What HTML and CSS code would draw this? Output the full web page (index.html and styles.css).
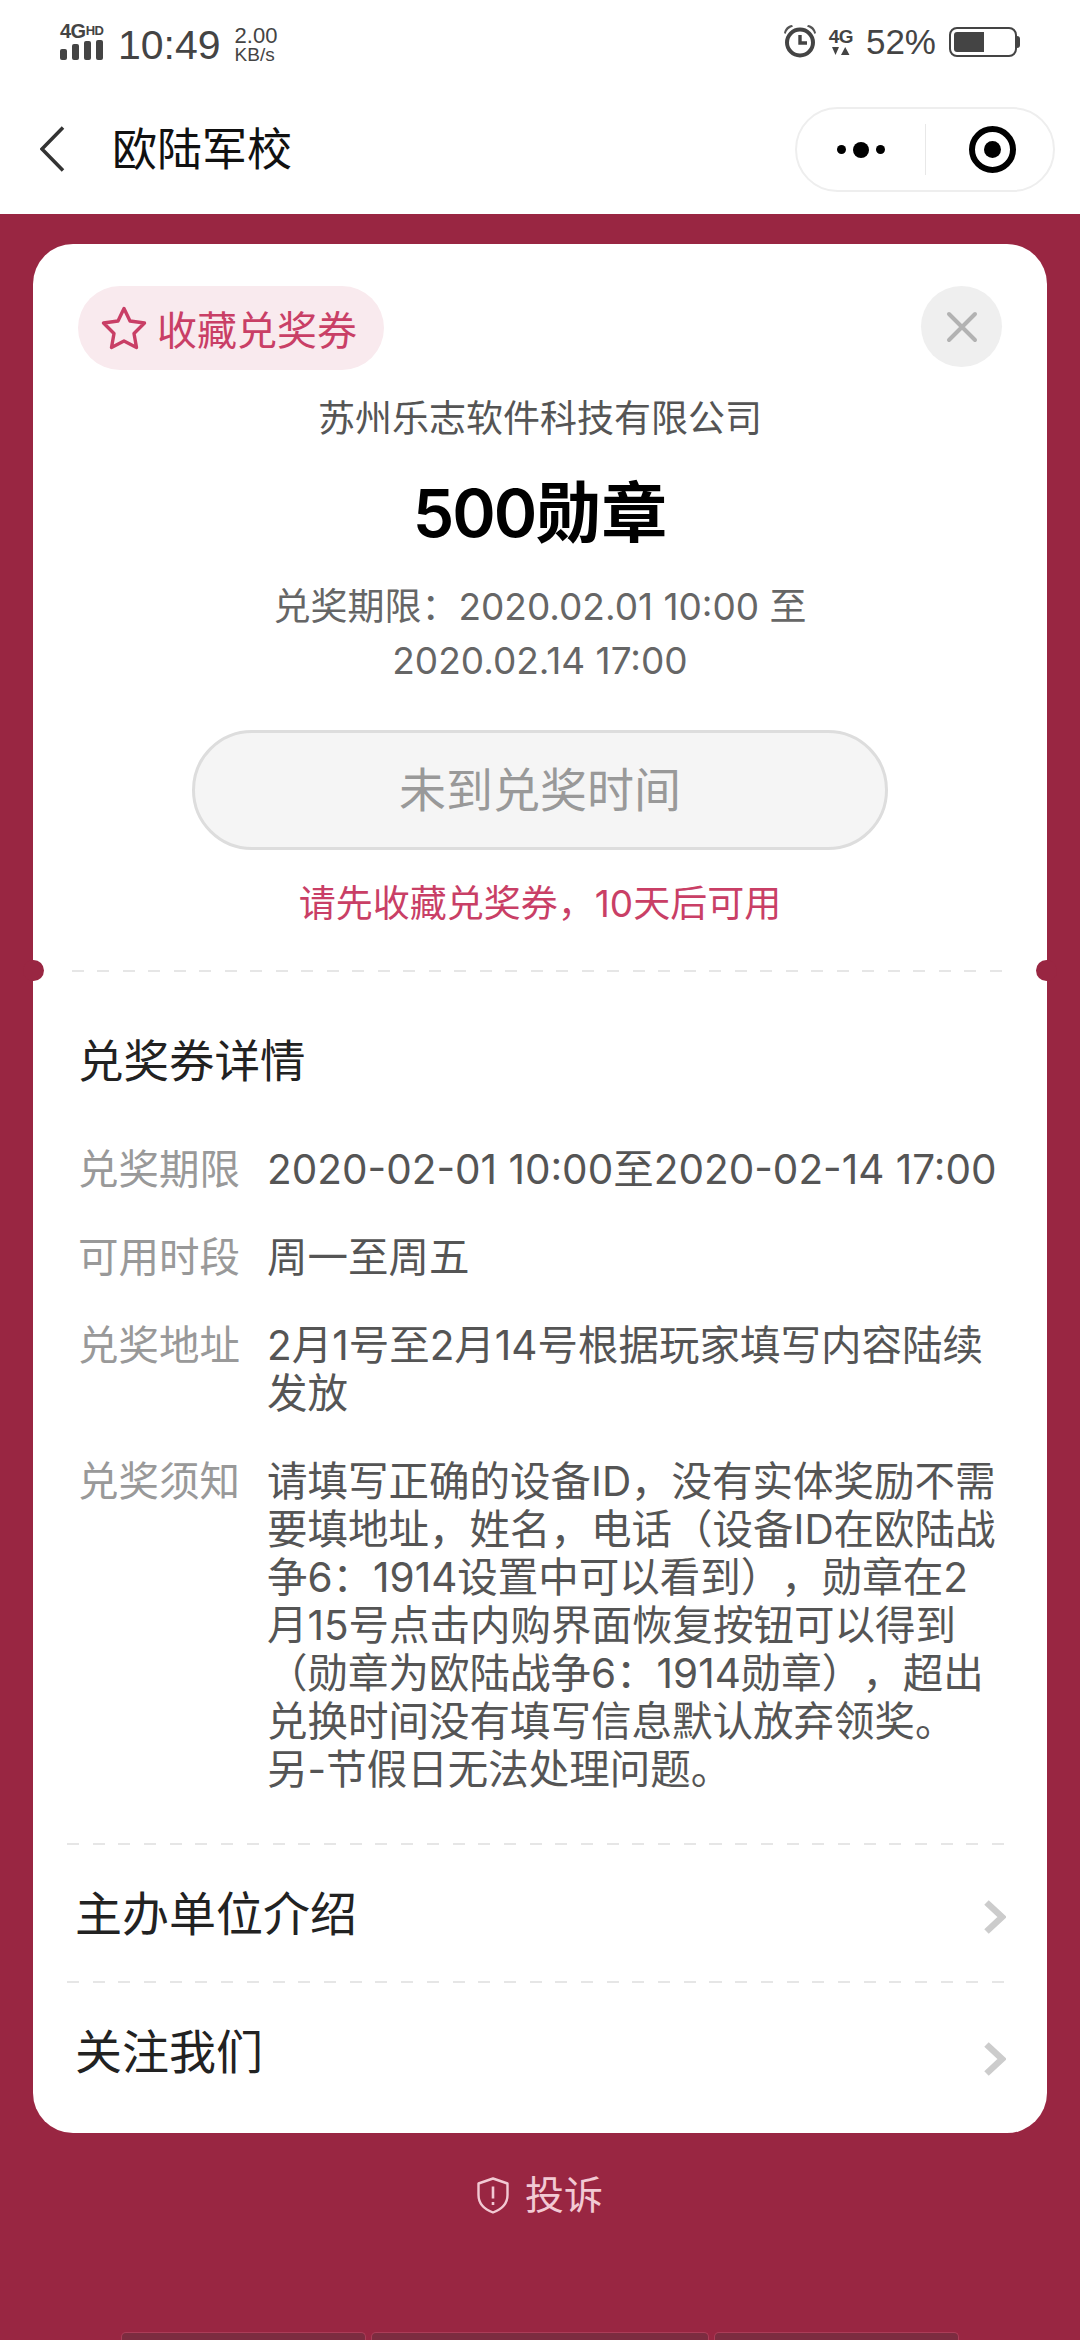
FILE: index.html
```html
<!DOCTYPE html>
<html lang="zh-CN">
<head>
    <meta charset="UTF-8">
    <meta name="viewport" content="width=device-width, initial-scale=1.0">
    <title>欧陆军校</title>
    <link rel="stylesheet" href="styles.css">
</head>
<body>
    <div class="top">
        <div class="status-bar">
            <div class="status-left">
                <div class="signal">
                    <div class="signal-text">4G<span class="signal-hd">HD</span></div>
                    <div class="signal-bars">
                        <span class="bar bar-1"></span>
                        <span class="bar bar-2"></span>
                        <span class="bar bar-3"></span>
                        <span class="bar bar-4"></span>
                    </div>
                </div>
                <span class="clock">10:49</span>
                <div class="speed">
                    <div class="speed-num">2.00</div>
                    <div class="speed-unit">KB/s</div>
                </div>
            </div>
            <div class="status-right">
                <svg class="alarm" width="34" height="34" viewBox="0 0 34 34">
                    <circle cx="17" cy="18.500" r="13" fill="none" stroke="#444" stroke-width="4"/>
                    <path d="M17 11v8h7" fill="none" stroke="#444" stroke-width="3.400"/>
                    <path d="M1 9 C2 4 5 1.500 9 1 L10 2.500 C6 4 4 6 2.500 10Z M33 9 C32 4 29 1.500 25 1 L24 2.500 C28 4 30 6 31.500 10Z" fill="#555"/>
                </svg>
                <div class="net">
                    <span class="net-text">4G</span>
                    <svg width="18" height="9" viewBox="0 0 18 9">
                        <path d="M0 0h7L3.500 8Z M9 8h8.500L13.200 0Z" fill="#444"/>
                    </svg>
                </div>
                <span class="percent">52%</span>
                <div class="battery">
                    <div class="battery-body"><div class="battery-fill"></div></div>
                    <div class="battery-cap"></div>
                </div>
            </div>
        </div>
        <nav class="nav">
            <svg class="back" width="25" height="46" viewBox="0 0 25 46">
                <path d="M23 1.500 2 23l21 21.500" fill="none" stroke="#333" stroke-width="3.500"/>
            </svg>
            <span class="nav-title">欧陆军校</span>
            <div class="capsule">
                <div class="capsule-more">
                    <span class="dot"></span>
                    <span class="dot dot-big"></span>
                    <span class="dot"></span>
                </div>
                <div class="capsule-line"></div>
                <div class="capsule-close"><span class="target"></span></div>
            </div>
        </nav>
    </div>

    <main class="card">
        <section class="coupon">
            <div class="coupon-head">
                <div class="fav">
                    <svg width="46" height="44" viewBox="0 0 46 44">
                        <path d="M23 2.500 29 15 43.500 17 33 27.500 35.500 41.500 23 35 10.500 41.500 13 27.500 2.500 17 17 15Z" fill="none" stroke="#c93f66" stroke-width="3.400" stroke-linejoin="round"/>
                    </svg>
                    <span>收藏兑奖券</span>
                </div>
                <div class="close">
                    <svg width="32" height="32" viewBox="0 0 32 32">
                        <path d="M3 3l26 26M29 3 3 29" stroke="#b2b2b2" stroke-width="4" stroke-linecap="round"/>
                    </svg>
                </div>
            </div>
            <p class="company">苏州乐志软件科技有限公司</p>
            <h1 class="prize"><span class="prize-num">500</span>勋章</h1>
            <p class="period">兑奖期限：2020.02.01 10:00 至 2020.02.14 17:00</p>
            <button class="redeem">未到兑奖时间</button>
            <p class="hint">请先收藏兑奖券，10天后可用</p>
        </section>

        <div class="tear">
            <span class="notch notch-left"></span>
            <span class="notch notch-right"></span>
        </div>

        <section class="details">
            <h2 class="details-title">兑奖券详情</h2>
            <div class="row">
                <div class="row-label">兑奖期限</div>
                <div class="row-value nowrap">2020-02-01 10:00至2020-02-14 17:00</div>
            </div>
            <div class="row">
                <div class="row-label">可用时段</div>
                <div class="row-value">周一至周五</div>
            </div>
            <div class="row">
                <div class="row-label">兑奖地址</div>
                <div class="row-value">2月1号至2月14号根据玩家填写内容陆续发放</div>
            </div>
            <div class="row">
                <div class="row-label">兑奖须知</div>
                <div class="row-value">请填写正确的设备ID，没有实体奖励不需要填地址，姓名，电话（设备ID在欧陆战争6：1914设置中可以看到），勋章在2月15号点击内购界面恢复按钮可以得到（勋章为欧陆战争6：1914勋章），超出兑换时间没有填写信息默认放弃领奖。另-节假日无法处理问题。</div>
            </div>
        </section>

        <a class="link-row">
            <span class="link-text">主办单位介绍</span>
            <svg class="chevron" width="22" height="34" viewBox="0 0 22 34"><path d="M2.500 2.500 18 17 2.500 31.500" fill="none" stroke="#ccc" stroke-width="6.500"/></svg>
        </a>
        <a class="link-row">
            <span class="link-text">关注我们</span>
            <svg class="chevron" width="22" height="34" viewBox="0 0 22 34"><path d="M2.500 2.500 18 17 2.500 31.500" fill="none" stroke="#ccc" stroke-width="6.500"/></svg>
        </a>
    </main>

    <div class="complain">
        <svg width="32" height="37" viewBox="0 0 32 37">
            <path d="M16 1.500 30.500 6.500V18C30.500 27 24 32.500 16 35.500 8 32.500 1.500 27 1.500 18V6.500Z" fill="none" stroke="#f2c9d3" stroke-width="2.400" stroke-linejoin="round"/>
            <path d="M16 9.500v12M16 25v3" stroke="#f2c9d3" stroke-width="2.600"/>
        </svg>
        <span>投诉</span>
    </div>

    <div class="bottom-tabs">
        <div class="tab tab-a"></div>
        <div class="tab tab-b"></div>
        <div class="tab tab-a"></div>
    </div>
</body>
</html>
```

FILE: styles.css
```css
* {
    box-sizing: border-box;
}
body {
    margin: 0;
    height: 2340px;
    overflow: hidden;
    display: flex;
    flex-direction: column;
    background-color: #992642;
    font-family: Inter, "Noto Sans CJK SC", sans-serif;
    color: #333;
    text-spacing-trim: space-all;
}
p, h1, h2 {
    margin: 0;
    font-weight: normal;
}

/* status bar + title */
.top {
    height: 214px;
    background-color: #fff;
}
.status-bar {
    height: 88px;
    padding: 21px 60px 0 60px;
    display: flex;
    justify-content: space-between;
    align-items: flex-start;
    color: #444;
}
.status-left, .status-right {
    display: flex;
    align-items: center;
}
.signal {
    width: 44px;
    margin-top: -8px;
}
.signal-text {
    font-family: "Liberation Sans", sans-serif;
    font-size: 20px;
    line-height: 16px;
    font-weight: bold;
    white-space: nowrap;
    letter-spacing: -0.5px;
}
.signal-hd {
    font-size: 13px;
    vertical-align: 3px;
}
.signal-bars {
    display: flex;
    align-items: flex-end;
    gap: 5px;
    margin-top: 1px;
    height: 20px;
}
.bar {
    width: 7px;
    background-color: #444;
    border-radius: 2px;
}
.bar-1 { height: 11px; }
.bar-2 { height: 16px; }
.bar-3 { height: 19px; }
.bar-4 { height: 20px; }
.clock {
    margin-left: 14px;
    font-family: "Liberation Sans", sans-serif;
    font-size: 41px;
    line-height: 48px;
}
.speed {
    margin-left: 14px;
    font-family: "Liberation Sans", sans-serif;
}
.speed-num {
    font-size: 22px;
    line-height: 18px;
}
.speed-unit {
    font-size: 19px;
    line-height: 19px;
}
.status-right {
    padding-top: 1px;
}
.alarm {
    margin-top: -3px;
}
.net {
    margin-left: 12px;
    width: 24px;
    display: flex;
    flex-direction: column;
    align-items: center;
}
.net-text {
    font-family: "Liberation Sans", sans-serif;
    font-size: 19px;
    line-height: 18px;
    font-weight: bold;
    letter-spacing: -0.5px;
}
.net svg {
    display: block;
    margin-top: 1px;
}
.percent {
    margin-left: 13px;
    font-family: "Liberation Sans", sans-serif;
    font-size: 35px;
    line-height: 40px;
}
.battery {
    margin-left: 13px;
    display: flex;
    align-items: center;
}
.battery-body {
    width: 68px;
    height: 30px;
    padding: 3px;
    border: 2px solid #444;
    border-radius: 8px;
}
.battery-fill {
    width: 30px;
    height: 100%;
    background-color: #444;
    border-radius: 3px 0 0 3px;
}
.battery-cap {
    width: 3px;
    height: 12px;
    background-color: #444;
    border-radius: 0 3px 3px 0;
}
.nav {
    height: 126px;
    padding: 19px 25px 0 40px;
    display: flex;
    align-items: flex-start;
}
.back {
    margin-top: 19px;
}
.nav-title {
    margin-left: 47px;
    font-size: 45px;
    line-height: 86px;
    color: #111;
}
.capsule {
    margin-left: auto;
    width: 260px;
    height: 85px;
    border: 2px solid #eee;
    border-radius: 43px;
    display: flex;
    align-items: center;
}
.capsule-more {
    width: 128px;
    display: flex;
    justify-content: center;
    align-items: center;
    gap: 7px;
}
.dot {
    width: 9px;
    height: 9px;
    border-radius: 50%;
    background-color: #000;
}
.dot-big {
    width: 16px;
    height: 16px;
}
.capsule-line {
    width: 1px;
    height: 51px;
    background-color: #e8e8e8;
}
.capsule-close {
    flex: 1;
    display: flex;
    justify-content: center;
    padding-left: 5px;
}
.target {
    width: 47px;
    height: 47px;
    border: 6px solid #000;
    border-radius: 50%;
    display: flex;
    align-items: center;
    justify-content: center;
}
.target::before {
    content: "";
    width: 17px;
    height: 17px;
    background-color: #000;
    border-radius: 50%;
}

/* coupon card */
.card {
    margin: 30px 33px 0;
    height: 1889px;
    background-color: #fff;
    border-radius: 40px;
}
.coupon {
    padding: 42px 45px 39px 45px;
    text-align: center;
}
.coupon-head {
    display: flex;
    justify-content: space-between;
    align-items: flex-start;
    height: 106px;
    text-align: left;
}
.fav {
    width: 306px;
    height: 84px;
    padding-left: 23px;
    display: flex;
    align-items: center;
    gap: 10px;
    background-color: #f9eaee;
    border-radius: 42px;
    color: #c93f66;
    font-size: 40px;
}
.close {
    width: 81px;
    height: 81px;
    display: flex;
    align-items: center;
    justify-content: center;
    background-color: #efefef;
    border-radius: 50%;
}
.company {
    font-size: 37px;
    line-height: 54px;
    color: #555;
}
.prize {
    margin-top: 28px;
    font-size: 66px;
    line-height: 78px;
    font-weight: bold;
    color: #000;
}
.prize-num {
    font-weight: 600;
    letter-spacing: -2px;
}
.period {
    width: 620px;
    margin: 28px auto 0;
    font-size: 37px;
    line-height: 54px;
    color: #666;
}
.redeem {
    display: block;
    width: 696px;
    height: 120px;
    margin: 42px auto 0;
    padding-bottom: 9px;
    background-color: #f5f5f5;
    border: 3px solid #ddd;
    border-radius: 60px;
    font-family: inherit;
    font-size: 47px;
    color: #999;
}
.hint {
    margin-top: 27px;
    font-size: 37px;
    line-height: 54px;
    color: #c93f66;
}
.tear {
    position: relative;
    height: 2px;
    margin: 0 39px;
    background: repeating-linear-gradient(90deg, #e6e6e6 0, #e6e6e6 12px, transparent 12px, transparent 25.5px);
}
.notch {
    position: absolute;
    top: -10px;
    width: 21px;
    height: 21px;
    background-color: #992642;
    border-radius: 50%;
}
.notch-left {
    left: -49px;
}
.notch-right {
    right: -49px;
}
.details {
    padding: 60px 46px 40px 45px;
}
.details-title {
    font-size: 45.500px;
    line-height: 60px;
    color: #222;
    margin-bottom: 54px;
}
.row {
    display: flex;
    margin-bottom: 40px;
}
.row:last-child {
    margin-top: 1px;
    margin-bottom: 9px;
}
.row-label {
    flex: none;
    width: 189px;
    font-size: 40.500px;
    line-height: 48px;
    color: #999;
}
.row-value {
    flex: 1;
    font-size: 40.500px;
    line-height: 48px;
    color: #555;
}
.nowrap {
    white-space: nowrap;
}
.link-row {
    height: 138px;
    margin: 0 41px 0 34px;
    padding: 0 0 4px 8px;
    display: flex;
    justify-content: space-between;
    align-items: center;
    font-size: 47px;
    color: #222;
    background: repeating-linear-gradient(90deg, #e6e6e6 0, #e6e6e6 12px, transparent 12px, transparent 25.7px) top / 100% 2px no-repeat;
}
.chevron {
    margin-top: 14px;
}
.link-row:last-child .chevron {
    margin-top: 21px;
}

/* footer */
.complain {
    margin-top: 38px;
    display: flex;
    justify-content: center;
    align-items: center;
    gap: 16px;
    font-size: 39px;
    line-height: 48px;
    color: #f2c9d3;
}
.bottom-tabs {
    margin-top: auto;
    height: 8px;
    padding: 0 121px;
    display: flex;
    gap: 5px;
}
.tab {
    height: 8px;
    background-color: #7c2c40;
    border: 1px solid #ab3d58;
    border-bottom: none;
    border-radius: 5px 5px 0 0;
}
.tab-a {
    width: 245px;
}
.tab-b {
    width: 339px;
}
```
